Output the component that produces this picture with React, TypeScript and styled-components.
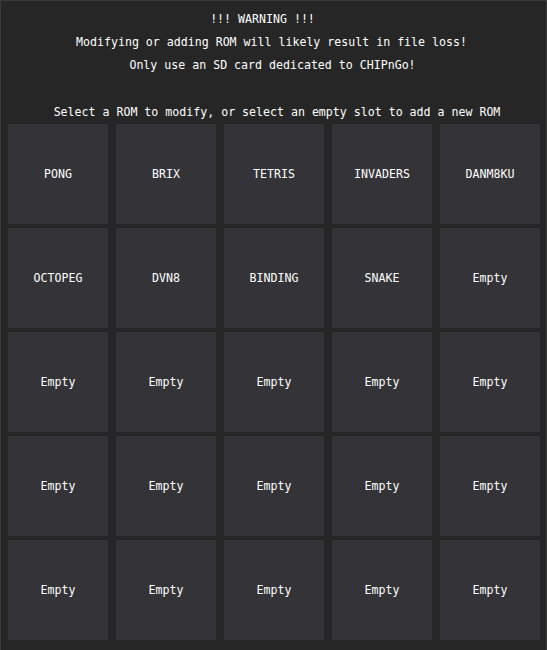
import React from "react";
import styled, { createGlobalStyle } from "styled-components";

const Global = createGlobalStyle`
  html, body { margin: 0; padding: 0; background: #262626; }
  body { font-family: "DejaVu Sans Mono", "Liberation Mono", monospace; }
`;

const Window = styled.div`
  box-sizing: border-box;
  width: 547px;
  height: 650px;
  background: #262626;
  border: 1px solid #3a3a3a;
  border-bottom: none;
  color: #ffffff;
  font-family: "DejaVu Sans Mono", "Liberation Mono", monospace;
  font-size: 11.6px;
  display: flex;
  flex-direction: column;
  align-items: stretch;
`;

const Header = styled.div`
  padding-top: 7px;
  display: flex;
  flex-direction: column;
  align-items: center;
`;

const Line = styled.div<{ $gapBefore?: number; $shift?: number }>`
  height: 23px;
  line-height: 22px;
  white-space: pre;
  margin-top: ${(p) => p.$gapBefore ?? 0}px;
  margin-left: ${(p) => (p.$shift ?? 0) * 2}px;
`;

const Grid = styled.div`
  display: grid;
  grid-template-columns: repeat(5, 100px);
  grid-auto-rows: 100px;
  column-gap: 8px;
  row-gap: 4px;
  padding-left: 7px;
`;

const Slot = styled.button`
  all: unset;
  box-sizing: border-box;
  background: #333338;
  color: #ffffff;
  display: flex;
  align-items: center;
  justify-content: center;
  font-family: inherit;
  font-size: inherit;
  cursor: pointer;
  &:hover { background: #3c3c42; }
`;

const roms = ["PONG", "BRIX", "TETRIS", "INVADERS", "DANM8KU", "OCTOPEG", "DVN8", "BINDING", "SNAKE"];
const slots = Array.from({ length: 25 }, (_, i) => roms[i] ?? "Empty");

export default function App() {
  return (
    <>
      <Global />
      <Window>
        <Header>
          <Line $shift={-11}>!!! WARNING !!!</Line>
          <Line $shift={-2}>Modifying or adding ROM will likely result in file loss!</Line>
          <Line $shift={-1}>Only use an SD card dedicated to CHIPnGo!</Line>
          <Line $gapBefore={24} $shift={3.5}>
            Select a ROM to modify, or select an empty slot to add a new ROM
          </Line>
        </Header>
        <Grid>
          {slots.map((s, i) => (
            <Slot key={i}>{s}</Slot>
          ))}
        </Grid>
      </Window>
    </>
  );
}
